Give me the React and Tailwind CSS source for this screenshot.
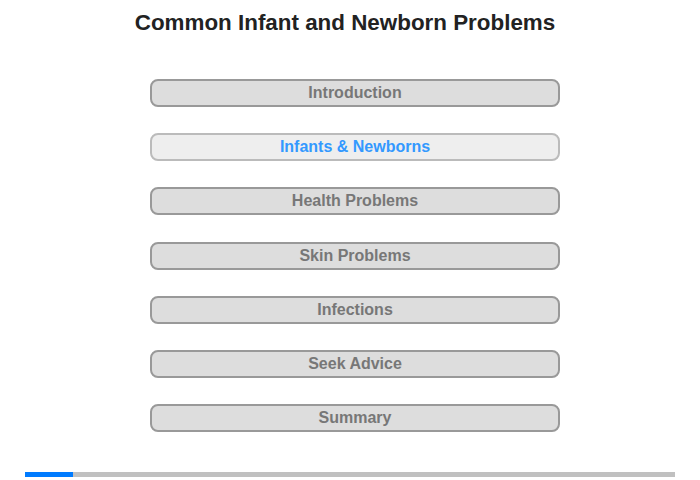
const ITEMS = [
  'Introduction',
  'Infants & Newborns',
  'Health Problems',
  'Skin Problems',
  'Infections',
  'Seek Advice',
  'Summary',
];

const ACTIVE = 1;

export default function App() {
  return (
    <div
      className="w-[700px] h-[480px] bg-white flex flex-col items-center"
      style={{ fontFamily: '"Liberation Sans", Arial, sans-serif' }}
    >
      <h1 className="mt-[9px] mr-[10px] h-[28px] text-[22.4px] leading-[28px] font-bold text-[#222]">
        Common Infant and Newborn Problems
      </h1>

      <div className="mt-[42px] ml-[10px] flex flex-col gap-[26.2px]">
        {ITEMS.map((item, i) => (
          <button
            key={item}
            className={`w-[410px] h-[28px] rounded-[8px] border-2 text-[16px] font-bold leading-none ${
              i === ACTIVE
                ? 'bg-[#eeeeee] border-[#bbbbbb] text-[#3399ff]'
                : 'bg-[#dddddd] border-[#999999] text-[#777777]'
            }`}
          >
            {item}
          </button>
        ))}
      </div>

      <div className="mt-auto mb-[3px] w-[650px] h-[5px] bg-[#c0c0c0] flex">
        <div className="w-[48px] h-full bg-[#007bff]" />
      </div>
    </div>
  );
}
